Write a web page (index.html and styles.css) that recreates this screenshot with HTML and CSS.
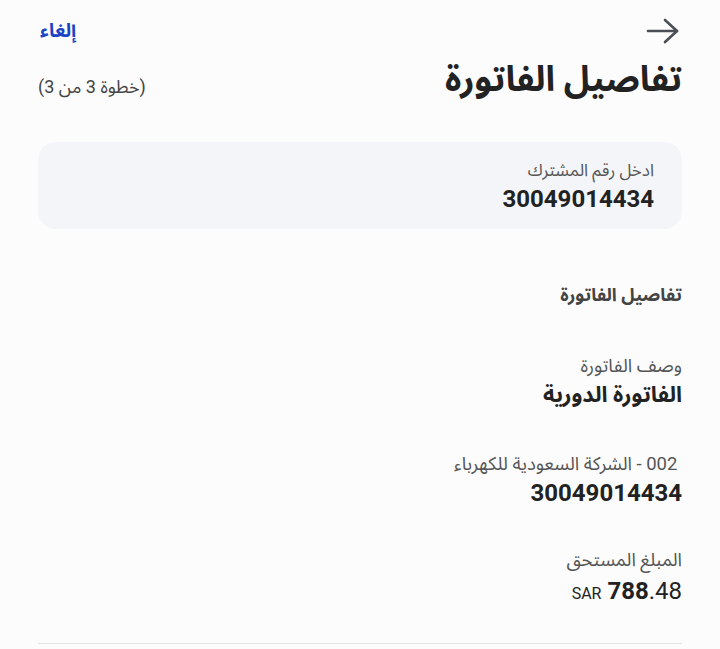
FILE: index.html
```html
<!DOCTYPE html>
<html lang="ar" dir="rtl">
<head>
    <meta charset="UTF-8">
    <meta name="viewport" content="width=device-width, initial-scale=1.0">
    <title>تفاصيل الفاتورة</title>
    <link rel="stylesheet" href="styles.css">
</head>
<body>
    <div class="page">
        <header class="top-bar">
            <button class="back-btn" aria-label="رجوع">
                <svg width="34" height="26" viewBox="0 0 34 26" fill="none" stroke="#4a4f57" stroke-width="2.6" stroke-linecap="round" stroke-linejoin="round">
                    <path d="M2 13h29"/>
                    <path d="M19 2l12 11-12 11"/>
                </svg>
            </button>
            <a class="cancel" href="#">إلغاء</a>
        </header>

        <div class="title-row">
            <h1>تفاصيل الفاتورة</h1>
            <span class="step">(خطوة 3 من 3)</span>
        </div>

        <div class="subscriber-card">
            <span class="label">ادخل رقم المشترك</span>
            <span class="value num">30049014434</span>
        </div>

        <h2 class="section-title">تفاصيل الفاتورة</h2>

        <div class="field">
            <span class="label">وصف الفاتورة</span>
            <span class="value">الفاتورة الدورية</span>
        </div>

        <div class="field">
            <span class="label">&nbsp;002 - الشركة السعودية للكهرباء</span>
            <span class="value num">30049014434</span>
        </div>

        <div class="field amount-field">
            <span class="label">المبلغ المستحق</span>
            <span class="amount" dir="ltr"><span class="currency">SAR</span> <b>788</b>.48</span>
        </div>

        <hr class="divider">
    </div>
</body>
</html>
```

FILE: styles.css
```css
* {
    margin: 0;
    padding: 0;
    box-sizing: border-box;
}

body {
    font-family: Roboto, "Noto Sans Arabic", "Noto Naskh Arabic", "DejaVu Sans", sans-serif;
    background: #fcfcfc;
    color: #222;
}

.page {
    padding: 14px 38px 0;
}

.top-bar {
    display: flex;
    justify-content: space-between;
    align-items: center;
    height: 34px;
}

.back-btn {
    background: none;
    border: none;
    display: flex;
    margin-right: 2px;
}

.cancel {
    color: #1b45c4;
    font-weight: 700;
    font-size: 19px;
    text-decoration: none;
    margin-left: 2px;
}

.title-row {
    display: flex;
    justify-content: space-between;
    align-items: flex-end;
    margin-top: 10px;
}

h1 {
    font-size: 35px;
    line-height: 44px;
    font-weight: 700;
    color: #222;
}

.step {
    font-size: 18px;
    line-height: 20px;
    color: #444;
    margin-bottom: 5px;
}

.subscriber-card {
    display: flex;
    flex-direction: column;
    gap: 2px;
    background: #f4f5f9;
    border-radius: 18px;
    padding: 16px 28px 15px;
    margin-top: 40px;
}

.label {
    font-size: 17px;
    line-height: 24px;
    color: #555;
}

.field .label {
    font-size: 18.5px;
}

.value {
    font-size: 22px;
    line-height: 30px;
    font-weight: 700;
    color: #222;
}

.num {
    font-size: 24px;
}

.section-title {
    font-size: 18px;
    line-height: 24px;
    font-weight: 700;
    color: #444;
    margin-top: 54px;
}

.field {
    display: flex;
    flex-direction: column;
    align-items: flex-start;
    gap: 2px;
    margin-top: 47px;
}

.field + .field {
    margin-top: 42px;
}

.field + .amount-field {
    margin-top: 40px;
    gap: 4px;
}

.amount {
    font-size: 24px;
    line-height: 30px;
    color: #222;
}

.amount b {
    font-weight: 700;
}

.currency {
    font-size: 16px;
}

.divider {
    border: none;
    border-top: 1px solid #e4e4e4;
    margin-top: 34px;
}
```
